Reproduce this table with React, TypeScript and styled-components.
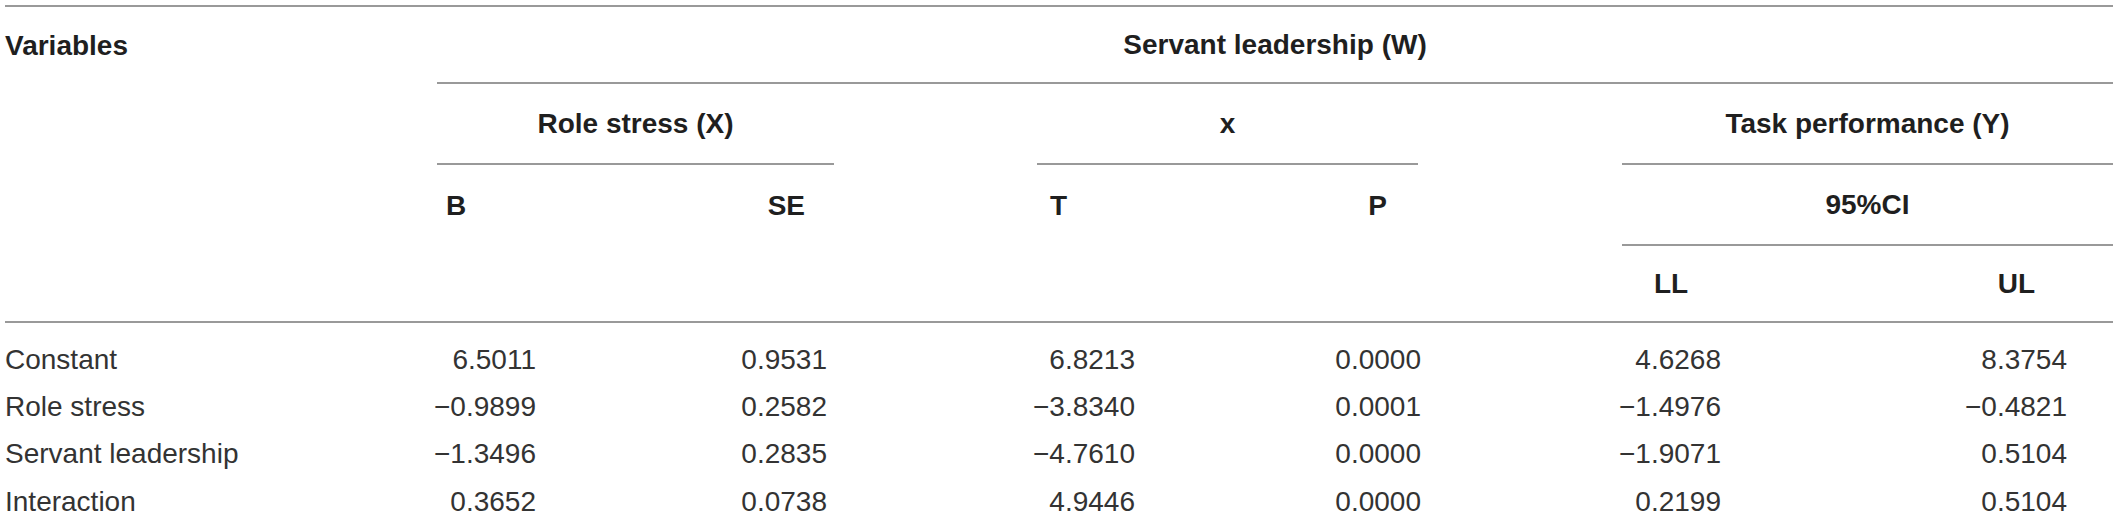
import styled, { createGlobalStyle } from 'styled-components';

type Align = 'left' | 'right' | 'center';

const rows: { label: string; values: string[] }[] = [
  { label: 'Constant', values: ['6.5011', '0.9531', '6.8213', '0.0000', '4.6268', '8.3754'] },
  { label: 'Role stress', values: ['−0.9899', '0.2582', '−3.8340', '0.0001', '−1.4976', '−0.4821'] },
  { label: 'Servant leadership', values: ['−1.3496', '0.2835', '−4.7610', '0.0000', '−1.9071', '0.5104'] },
  { label: 'Interaction', values: ['0.3652', '0.0738', '4.9446', '0.0000', '0.2199', '0.5104'] },
];

const justify = (a?: Align) => (a === 'right' ? 'flex-end' : a === 'center' ? 'center' : 'flex-start');

export default function App() {
  return (
    <>
      <GlobalStyle />
      <Page>
        <Head>
          <HeadCell $col="1" $row="1">Variables</HeadCell>
          <HeadCell $col="2 / 10" $row="1" $align="center" $rule>Servant leadership (W)</HeadCell>

          <HeadCell $col="2 / 4" $row="2" $align="center" $rule>Role stress (X)</HeadCell>
          <HeadCell $col="5 / 7" $row="2" $align="center" $rule>x</HeadCell>
          <HeadCell $col="8 / 10" $row="2" $align="center" $rule>Task performance (Y)</HeadCell>

          <HeadCell $col="2" $row="3" $inset={9}>B</HeadCell>
          <HeadCell $col="3" $row="3" $align="right" $inset={29}>SE</HeadCell>
          <HeadCell $col="5" $row="3" $inset={13}>T</HeadCell>
          <HeadCell $col="6" $row="3" $align="right" $inset={31}>P</HeadCell>
          <HeadCell $col="8 / 10" $row="3" $align="center" $rule>95%CI</HeadCell>

          <HeadCell $col="8" $row="4" $inset={32}>LL</HeadCell>
          <HeadCell $col="9" $row="4" $align="right" $inset={78}>UL</HeadCell>
        </Head>

        <Body>
          {rows.map((r) => (
            <Row key={r.label}>
              <Cell>{r.label}</Cell>
              {r.values.map((v, i) => (
                <Cell key={i} $align="right">{v}</Cell>
              ))}
            </Row>
          ))}
        </Body>
      </Page>
    </>
  );
}

const GlobalStyle = createGlobalStyle`
  html, body {
    margin: 0;
    padding: 0;
    background: #fff;
  }
  body {
    font-family: "Liberation Sans", Arial, sans-serif;
  }
`;

const Page = styled.div`
  width: 2108px;
  padding: 5px 5px 0 5px;
`;

const Head = styled.div`
  display: grid;
  grid-template-columns: 432px 199px 198px 203px 191px 190px 204px 246px 245px;
  grid-template-rows: 77px 81px 81px 75px;
  border-top: 2px solid #999;
  border-bottom: 2px solid #999;
`;

const HeadCell = styled.div<{ $col: string; $row: string; $align?: Align; $inset?: number; $rule?: boolean }>`
  grid-column: ${(p) => p.$col};
  grid-row: ${(p) => p.$row};
  display: flex;
  align-items: center;
  justify-content: ${(p) => justify(p.$align)};
  padding-left: ${(p) => (p.$align === 'right' ? 0 : p.$inset ?? 0)}px;
  padding-right: ${(p) => (p.$align === 'right' ? p.$inset ?? 0 : 0)}px;
  border-bottom: ${(p) => (p.$rule ? '2px solid #999' : 'none')};
  font-size: 28px;
  line-height: 22px;
  font-weight: 700;
  color: #1f1f1f;
  white-space: nowrap;
`;

const Body = styled.div`
  padding-top: 13px;
`;

const Row = styled.div`
  display: grid;
  grid-template-columns: 300px 231px 291px 308px 286px 300px 346px;
  height: 47.3px;
`;

const Cell = styled.div<{ $align?: Align }>`
  display: flex;
  align-items: center;
  justify-content: ${(p) => justify(p.$align)};
  font-size: 28px;
  line-height: 20px;
  color: #333;
  white-space: nowrap;
`;
